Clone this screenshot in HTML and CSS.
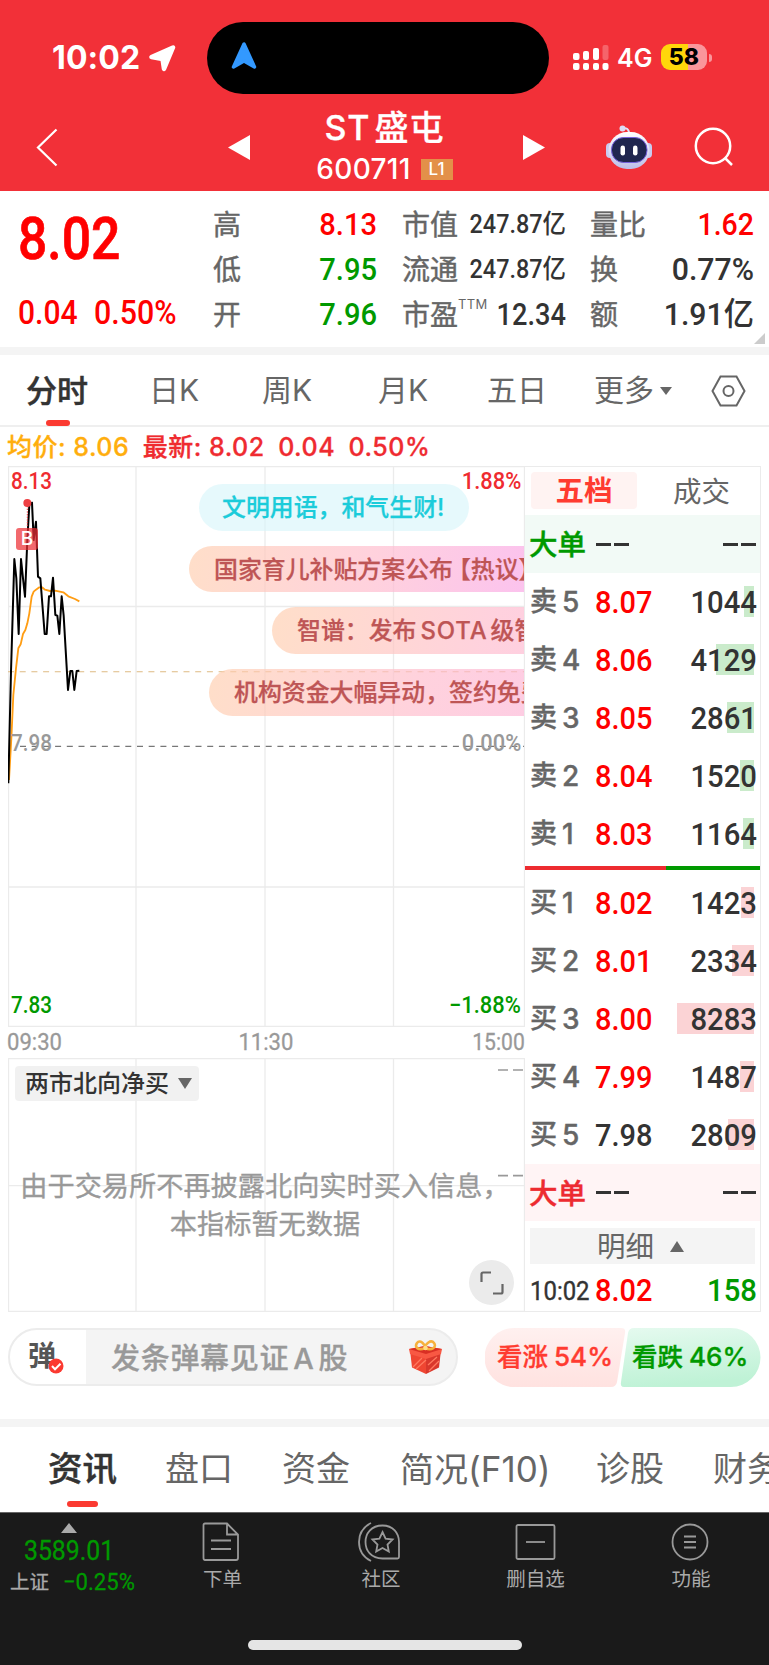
FILE: index.html
```html
<!DOCTYPE html>
<html lang="zh-CN">
<head>
<meta charset="utf-8">
<title>ST盛屯 600711</title>
<link rel="stylesheet" href="styles.css">
</head>
<body>
<div class="app">
<header class="top">
  <div class="status">
    <div class="clock">10:02</div>
    <svg class="loc" width="27" height="27" viewBox="0 0 27 27"><path d="M24 2.500 15 24 13.500 14 2.500 12Z" fill="#fff" stroke="#fff" stroke-width="4.500" stroke-linejoin="round"/></svg>
    <div class="island"><svg width="26" height="29" viewBox="0 0 26 29"><path d="M13 3 2.500 26 13 20 23.500 26Z" fill="#3399ff" stroke="#3399ff" stroke-width="3.500" stroke-linejoin="round"/></svg></div>
    <svg class="signal" width="37" height="26" viewBox="0 0 37 26" fill="#fff"><rect y="8" width="6.500" height="7" rx="2"/><rect x="10" y="6" width="6" height="9" rx="2"/><rect x="20" y="3" width="6" height="12" rx="2"/><rect x="29.500" width="6" height="15" rx="2" opacity=".25"/><rect y="18" width="6.500" height="7" rx="2"/><rect x="10" y="18" width="6" height="7" rx="2"/><rect x="20" y="18" width="6" height="7" rx="2"/><rect x="29.500" y="18" width="6" height="7" rx="2"/></svg>
    <div class="net">4G</div>
    <div class="battery">58</div><i class="nub"></i>
  </div>
  <div class="titlebar">
    <svg width="22" height="39" viewBox="0 0 22 39"><path d="M20.500 1.500 2 19.500 20.500 37.500" fill="none" stroke="#fff" stroke-width="2.200"/></svg>
    <svg class="prev" width="22" height="25"><path d="M22 0V25L0 12.500Z" fill="#fff"/></svg>
    <div class="name"><div class="stock"><span>ST</span>盛屯</div><div class="code">600711<b>L1</b></div></div>
    <svg class="next" width="22" height="25"><path d="M0 0V25L22 12.500Z" fill="#fff"/></svg>
    <svg class="robot" width="48" height="45" viewBox="0 0 48 45">
      <defs><linearGradient id="rb" x2="0" y2="1"><stop stop-color="#fff"/><stop offset="1" stop-color="#bcbde8"/></linearGradient></defs>
      <path d="M17 3.500c4-1 7 0 7 5" fill="none" stroke="#e3e4fa" stroke-width="2"/><circle cx="17.500" cy="3.500" r="3" fill="#dcdcf5"/>
      <rect x="1" y="18" width="8" height="15" rx="4" fill="#c9cbf0"/><rect x="39" y="18" width="8" height="15" rx="4" fill="#c9cbf0"/>
      <rect x="3.500" y="7" width="41" height="37" rx="18.500" fill="url(#rb)"/>
      <rect x="6.500" y="12.500" width="35.500" height="25" rx="12" fill="#20264f" stroke="#7560dc"/>
      <rect x="15.500" y="20.500" width="4.500" height="10" rx="2.200" fill="#fff"/><rect x="28" y="20.500" width="4.500" height="10" rx="2.200" fill="#fff"/>
    </svg>
    <svg class="search" width="40" height="40" viewBox="0 0 40 40" fill="none" stroke="#fff" stroke-width="2.500"><circle cx="19" cy="19" r="17.200"/><path d="m31 31 7 7"/></svg>
  </div>
</header>

<section class="quote">
  <div class="price"><div class="big n">8.02</div><div class="chg"><span class="n">0.04</span><span class="n">0.50%</span></div></div>
  <dl class="c1"><dt>高</dt><dd class="n up">8.13</dd><dt>低</dt><dd class="n dn">7.95</dd><dt>开</dt><dd class="n dn">7.96</dd></dl>
  <dl class="c2"><dt>市值</dt><dd class="n sm">247.87亿</dd><dt>流通</dt><dd class="n sm">247.87亿</dd><dt>市盈<sup>TTM</sup></dt><dd class="n pe">12.34</dd></dl>
  <dl class="c3"><dt>量比</dt><dd class="n up">1.62</dd><dt>换</dt><dd class="n">0.77%</dd><dt>额</dt><dd class="n">1.91亿</dd></dl>
  <i class="corner"></i>
</section>

<nav class="periods">
  <span class="on">分时</span><span>日K</span><span>周K</span><span>月K</span><span>五日</span><span>更多<i></i></span>
  <svg width="35" height="32" viewBox="0 0 35 32" fill="none" stroke="#666" stroke-width="2"><path d="M9.500 1.500h16L33.500 16l-8 14.500h-16L1.500 16Z"/><circle cx="17.500" cy="16" r="5"/></svg>
</nav>
<div class="legend"><span class="avg">均价: 8.06</span><span>最新: 8.02</span><span>0.04</span><span>0.50%</span></div>

<main class="market">
  <div class="charts">
    <div class="main-chart">
      <svg class="plot" width="517" height="561" viewBox="8 466 517 561" fill="none">
        <path d="M8 466.500H525M8 606.500H525M8 887H525M8 1026.300H525M8.500 466V1027M136 466V1027M265 466V1027M393.500 466V1027M524.500 466V1027" stroke="#ebebeb" stroke-width="1.300"/>
        <path d="M8 671.700H524" stroke="#deba82" stroke-width="1.100" stroke-dasharray="6 5.700"/>
        <path d="M20 746.300H524" stroke="#777" stroke-width="1.200" stroke-dasharray="6 5.700"/>
        <g transform="translate(0 455) scale(.33333)" stroke-linejoin="round">
          <path d="m27 975 7-125 6-130 8-80 7-60 7-12 7-31 7-12 6-20 6-30 7-50 6-15 7-6 10-7h8l9 7 15 4 15-1 25 5 15 12 20 8 13 7" stroke="#ff9d13" stroke-width="5.500"/>
          <path d="M25 985 33 650 43 312 49 370 56 537 63 312 69 370 75 425 82 255 88 150 96 143 101 255 108 200 114 365 121 370 134 537H140L147 424H153L159 368 166 480 172 482 178 537 185 424 191 482 204 705 211 648H217L223 705 230 648 238 647" stroke="#000" stroke-width="6"/>
          <path d="M82 145V215" stroke="#ed2f35" stroke-width="3" stroke-dasharray="4 4"/><circle cx="82" cy="144" r="12" fill="#ee3f43"/>
        </g>
      </svg>
      <span class="n ax tl">8.13</span><span class="n ax tr">1.88%</span>
      <span class="n ax ml">7.98</span><span class="n ax mr">0.00%</span>
      <span class="n ax bl">7.83</span><span class="n ax br">−1.88%</span>
      <b class="buy">B</b>
      <div class="barrage"><p class="calm">文明用语，和气生财!</p><p class="b2">国家育儿补贴方案公布<span>【热议】</span></p><p class="b3">智谱：发布<span>SOTA</span>级智</p><p class="b4">机构资金大幅异动，签约免费</p></div>
    </div>
    <div class="times"><span class="n">09:30</span><span class="n">11:30</span><span class="n">15:00</span></div>
    <div class="sub-chart">
      <svg class="plot" width="517" height="254" viewBox="8 1058 517 254"><path d="M8 1058.700H525M8 1185.600H525M8 1311.500H525M8.500 1058V1312M136 1058V1312M265 1058V1312M393.500 1058V1312M524.500 1058V1312" stroke="#ebebeb" stroke-width="1.300"/><path d="M498 1070h10m5 0h10M498 1175.700h10m5 0h10" stroke="#999" stroke-width="1.700"/></svg>
      <div class="indicator">两市北向净买<i></i></div>
      <p class="empty">由于交易所不再披露北向实时买入信息，<br>本指标暂无数据</p>
      <div class="expand"><svg width="24" height="24" fill="none" stroke="#666" stroke-width="2.200"><path d="M1.500 11V3q0-1.500 1.500-1.500h8M13 22.500h8q1.500 0 1.500-1.500v-8"/></svg></div>
    </div>
  </div>
  <aside class="book">
    <div class="switch"><b>五档</b><span>成交</span></div>
    <div class="large sell"><b>大单</b><i></i><i></i></div>
    <div class="row"><label>卖<span>5</span></label><em class="n">8.07</em><u style="width:10px"></u><strong class="n">1044</strong></div>
    <div class="row"><label>卖<span>4</span></label><em class="n">8.06</em><u style="width:38px"></u><strong class="n">4129</strong></div>
    <div class="row"><label>卖<span>3</span></label><em class="n">8.05</em><u style="width:27px"></u><strong class="n">2861</strong></div>
    <div class="row"><label>卖<span>2</span></label><em class="n">8.04</em><u style="width:14px"></u><strong class="n">1520</strong></div>
    <div class="row"><label>卖<span>1</span></label><em class="n">8.03</em><u style="width:11px"></u><strong class="n">1164</strong></div>
    <div class="ratio"></div>
    <div class="row bid"><label>买<span>1</span></label><em class="n">8.02</em><u style="width:13px"></u><strong class="n">1423</strong></div>
    <div class="row bid"><label>买<span>2</span></label><em class="n">8.01</em><u style="width:22px"></u><strong class="n">2334</strong></div>
    <div class="row bid"><label>买<span>3</span></label><em class="n">8.00</em><u style="width:77px"></u><strong class="n">8283</strong></div>
    <div class="row bid"><label>买<span>4</span></label><em class="n">7.99</em><u style="width:14px"></u><strong class="n">1487</strong></div>
    <div class="row bid flat"><label>买<span>5</span></label><em class="n">7.98</em><u style="width:26px"></u><strong class="n">2809</strong></div>
    <div class="large bigbuy"><b>大单</b><i></i><i></i></div>
    <div class="detail">明细<i></i></div>
    <div class="row tick"><label class="n">10:02</label><em class="n">8.02</em><strong class="n dn">158</strong></div>
  </aside>
</main>

<section class="talk">
  <div class="input">
    <div class="dan">弹<svg width="16" height="16"><circle cx="8" cy="8" r="7.500" fill="#fb3a31"/><path d="m4 8 3 3.200 5.500-5.500" fill="none" stroke="#fff" stroke-width="2"/></svg></div>
    <span>发条弹幕见证<em>A</em>股</span>
    <svg class="gift" width="33" height="35" viewBox="0 0 33 35"><path d="M1 10 17 15V34L3 27.500Z" fill="#ef4632"/><path d="m17 15 15-5-2 17.500L17 34Z" fill="#d9382c"/><path d="m0 9 16-3 17 3-1 5-15 5L1 14Z" fill="#f85843"/><path d="m0 9 16-3 17 3-16 5Z" fill="#d92f24"/><path d="m4 27 9-9M7 29l10-9M20 31l10-10M19 25l9-8" stroke="#ff795f" stroke-width="1.300"/><g fill="none" stroke="#f6b13d" stroke-width="2.600"><path d="M16 8C9 11 5 7 8 3c3-4 8 1 8 5Z"/><path d="M16 8c7 3 12-1 9-5-3-4-9 1-9 5Z"/></g><circle cx="16.500" cy="8" r="2.300" fill="#ffdc84"/></svg>
  </div>
  <div class="vote">
    <svg width="276" height="59" viewBox="0 0 276 59"><defs><linearGradient id="vr" x2="0" y2="1"><stop stop-color="#fff0ef"/><stop offset="1" stop-color="#ffe2e0"/></linearGradient><linearGradient id="vg" x2=".2" y2="1"><stop stop-color="#e5faef"/><stop offset="1" stop-color="#bff2d6"/></linearGradient></defs><path d="M29 0H136Q141 0 140 5L132 54Q131 59 126 59H29A29 29 0 0 1 29 0Z" fill="url(#vr)"/><path d="M149 0H246A29 29 0 0 1 246 59H139Q135 59 136 54L143 5Q144 0 149 0Z" fill="url(#vg)"/></svg>
    <span>看涨<em>54%</em></span><span class="fall">看跌<em>46%</em></span>
  </div>
</section>

<nav class="sections"><span class="on">资讯</span><span>盘口</span><span>资金</span><span>简况<em>(F10)</em></span><span>诊股</span><span>财务</span></nav>

<footer class="dock">
  <div class="items">
    <div class="index"><i></i><span class="n val">3589.01</span><div><span>上证</span><span class="n pct">−0.25%</span></div></div>
    <div class="item"><svg class="doc" width="38" height="40" viewBox="0 0 38 40"><path d="M3 1.500H25L36 12.500V36Q36 38 34 38H3Q1.500 38 1.500 36V3Q1.500 1.500 3 1.500ZM25 1.500V12.500H36M9 18.500H29M9 27H29"/></svg>下单</div>
    <div class="item"><svg class="club" width="43" height="40" viewBox="0 0 43 40"><path d="M13 1C-3 9-3 31 13 39M24.500 3.500C13 3.500 7.500 11.500 7.500 20S13 36.500 24.500 36.500H39.500Q41 36.500 41 35V20C41 11 35 3.500 24.500 3.500ZM24.500 10l3.100 6.600 7 .9-5.100 5 1.300 7-6.300-3.500-6.300 3.500 1.300-7-5.100-5 7-.9Z"/></svg>社区</div>
    <div class="item"><svg width="41" height="40" viewBox="0 0 41 40"><rect x="1.500" y="3" width="38" height="34" rx="1.500"/><path d="M11 20H30"/></svg>删自选</div>
    <div class="item"><svg width="40" height="40" viewBox="0 0 40 40"><circle cx="19" cy="20" r="17.500"/><path d="M13 14.500H25M13 20H25M13 25.500H25"/></svg>功能</div>
  </div>
  <div class="home"></div>
</footer>
</div>
</body>
</html>
```
FILE: styles.css
```css
* { box-sizing: border-box; }
body { margin: 0; background: #fff; font-family: Inter, "Noto Sans CJK SC", sans-serif; color: #333; }
p, dl, dd { margin: 0; }
em, i { font-style: normal; }
svg { display: block; flex: none; }
.app { width: 769px; height: 1665px; overflow: hidden; display: flex; flex-direction: column; }
.app > * { flex: none; }
.n { font-family: Roboto, "Noto Sans CJK SC", sans-serif; font-weight: 500; white-space: nowrap; transform: scaleX(.92); transform-origin: left; }

.top { height: 191px; background: #f23038; color: #fff; }
.status { height: 116px; display: flex; align-items: center; padding-left: 52px; }
.clock { width: 97px; font-size: 32px; font-weight: 700; letter-spacing: .1px; margin-top: -1px; }
.island { width: 342px; height: 72px; margin-left: 31px; border-radius: 36px; background: #000; display: flex; align-items: center; padding-left: 24px; }
.island svg { margin-top: -5px; }
.signal { margin-left: 24px; }
.net { width: 44px; margin-left: 7px; font-size: 25px; font-weight: 600; }
.battery { width: 46px; height: 26px; margin-top: -2px; border-radius: 9px; background: linear-gradient(90deg, #ffd60a 58%, #fa969b 58%); color: #000; font-weight: 800; font-size: 23px; line-height: 26px; text-align: center; }
.nub { width: 3px; height: 8px; margin-left: 2px; border-radius: 0 3px 3px 0; background: #fa969b; }
.titlebar { height: 75px; display: flex; align-items: center; padding: 0 0 13px 36px; }
.prev { margin-left: 170px; }
.name { width: 273px; margin-top: 2px; display: flex; flex-direction: column; align-items: center; }
.stock { font-size: 34px; line-height: 41px; font-weight: 500; display: flex; gap: 4px; letter-spacing: 1px; margin-left: -4px; -webkit-text-stroke: .3px; }
.code { height: 42px; line-height: 44px; margin-left: -4px; font-size: 28px; font-weight: 500; display: flex; align-items: center; letter-spacing: .3px; }
.code b { width: 32px; height: 21px; margin: 1px 0 0 10px; background: #e39049; font-size: 17px; line-height: 21px; font-weight: 500; text-align: center; }
.robot { margin-left: 60px; }
.search { margin-left: 41px; }

.quote { position: relative; height: 164px; display: flex; border-bottom: 8px solid #f4f4f4; padding-top: 11px; }
.price { width: 213px; padding-left: 18px; color: #f00; }
.big { font-size: 60px; line-height: 74px; transform: scaleX(.86); -webkit-text-stroke: .7px #f00; }
.chg { display: flex; font-size: 33px; line-height: 40px; margin-top: 17px; }
.chg .n + .n { margin-left: 11px; }
.chg .n:first-child { transform: scaleX(.91); }
.quote dl { display: grid; grid-template-columns: auto 1fr; grid-template-rows: repeat(3, 45px); align-items: center; line-height: 45px; }
.quote dt { font-size: 28px; color: #666; white-space: nowrap; -webkit-text-stroke: .45px; padding-top: 1px; }
.quote dd { font-size: 32px; text-align: right; transform: scaleX(.91); transform-origin: right; margin-top: -1px; }
.quote dd.sm { font-size: 26px; transform: scaleX(.9); }
.quote dd.pe { transform: scaleX(.85); }
.quote .c3 dd { transform: scaleX(.945); }
.quote .c3 .up { transform: scaleX(.89); }
.quote .up { color: #f00; }
.quote .dn { color: #090; }
.c1 { width: 164px; }
.c2 { width: 164px; margin-left: 25px; }
.c3 { width: 164px; margin-left: 24px; }
.quote sup { font-size: 13px; position: absolute; line-height: 16px; margin-top: 3px; letter-spacing: .3px; -webkit-text-stroke: 0; }
.corner { position: absolute; right: 4px; bottom: 3px; border-left: 11px solid transparent; border-bottom: 11px solid #ccc; }

.periods { height: 72px; border-bottom: 2px solid #efefef; display: grid; grid-template-columns: 123px 113px 116px 109px 107px 117px 1fr; padding-left: 26px; align-items: center; font-size: 30px; color: #666; line-height: 71px; }
.periods .on { position: relative; color: #333; font-weight: 500; font-size: 31px; -webkit-text-stroke: .5px; }
.on::after { content: ""; position: absolute; left: 20px; bottom: 0; width: 24px; height: 6px; border-radius: 3px; background: #fb3a31; }
.periods i { display: inline-block; margin-left: 6px; vertical-align: 6px; border: 6px solid transparent; border-top: 8px solid #666; border-bottom: 0; }
.legend { height: 39px; display: flex; gap: 13.500px; padding: 1px 7px 0; line-height: 38px; font-size: 25px; letter-spacing: .5px; font-weight: 500; color: #ef2b30; white-space: nowrap; -webkit-text-stroke: .3px; }
.legend .avg { color: #ffae0d; }

.market { display: grid; grid-template-columns: 517px 236px; margin-left: 8px; height: 846px; }
.main-chart, .sub-chart { position: relative; overflow: hidden; }
.main-chart { height: 561px; }
.sub-chart { height: 254px; }
.plot { position: absolute; left: 0; top: 0; }
.ax { position: absolute; font-size: 24px; line-height: 24px; left: 3px; color: #999; transform: scaleX(.86); }
.tr, .mr, .br { left: auto; right: 4px; transform: scaleX(.91); transform-origin: right; }
.tl, .tr { top: 3px; color: #ef2b30; }
.ml, .mr { top: 265px; }
.bl, .br { bottom: 10px; color: #090; }
.buy { position: absolute; left: 8px; top: 62px; width: 22px; height: 22px; border-radius: 3px; background: rgba(237, 47, 53, .72); color: #fff; font-size: 19px; line-height: 22px; font-weight: 500; text-align: center; }
.barrage { position: absolute; inset: 18px 1px auto 0; overflow: hidden; display: grid; gap: 15px; }
.barrage p { width: 480px; height: 46.700px; border-radius: 24px; padding-left: 25px; line-height: 47px; font-size: 23.900px; font-weight: 500; white-space: nowrap; color: #be5555; -webkit-text-stroke: .25px; background: linear-gradient(100deg, rgba(255, 205, 172, .65), rgba(255, 190, 207, .7) 50%, rgba(249, 160, 231, .65) 95%); }
.barrage .calm { width: 270px; margin-left: 191px; padding-left: 23px; color: #1bccda; background: rgba(213, 245, 250, .6); }
.barrage .b2 { margin-left: 181px; width: 370px; }
.b2 span { margin-left: -6px; }
.barrage .b3 { margin-left: 264px; }
.barrage .b4 { margin-left: 201px; }
.barrage .b3, .barrage .b4 { background: linear-gradient(100deg, rgba(255, 205, 172, .65), rgba(255, 190, 207, .7) 45%, rgba(252, 175, 215, .65) 75%); }
.b3 span { margin: 0 3px 0 4px; letter-spacing: .9px; }
.times { height: 31px; display: flex; justify-content: space-between; font-size: 24px; line-height: 30px; color: #999; }
.times span { margin-left: -1px; }
.times span:nth-child(2) { transform-origin: center; }
.times span:last-child { transform: scaleX(.88); transform-origin: right; }
.times .n { font-weight: 400; -webkit-text-stroke: .3px; }
.indicator { position: absolute; left: 7px; top: 8px; width: 184px; height: 35px; padding-left: 10px; border-radius: 4px; background: rgba(239, 239, 239, .85); font-size: 24px; line-height: 36px; font-weight: 500; display: flex; align-items: center; }
.indicator i { margin-left: 9px; border: 7px solid transparent; border-top: 11px solid #666; border-bottom: 0; }
.empty { position: absolute; top: 110px; left: 12px; width: 490px; font-size: 27.200px; line-height: 38px; color: #999; text-align: center; white-space: nowrap; -webkit-text-stroke: .35px; }
.expand { position: absolute; left: 461px; top: 202px; width: 45px; height: 45px; border-radius: 50%; background: #ebebeb; display: grid; place-items: center; }

.book { border: 1px solid #ebebeb; border-left: 0; height: 846px; overflow: hidden; }
.switch { height: 48px; display: flex; align-items: center; padding: 0 0 1px 6px; font-size: 28.500px; }
.switch b { width: 106px; height: 37px; line-height: 38px; border-radius: 4px; background: #fff3f2; color: #ff3b30; text-align: center; font-weight: 700; }
.switch span { margin: -2px 0 0 36px; color: #666; }
.large { height: 58px; display: flex; align-items: center; padding: 0 4px; background: #f2faf6; }
.large b { width: 67px; font-size: 28.500px; font-weight: 500; color: #090; margin-top: -3px; -webkit-text-stroke: .4px; }
.large i { width: 33px; height: 3px; background: linear-gradient(90deg, #333 15px, transparent 15px 18px, #333 18px); }
.large i + i { margin-left: 94px; }
.row { position: relative; height: 58px; display: grid; grid-template-columns: 65px 61px 1fr; padding: 0 3px 0 5px; align-items: center; }
.row label { font-size: 27px; color: #666; font-weight: 500; display: flex; align-items: center; line-height: 40px; -webkit-text-stroke: .4px; }
.row label span { margin-left: 5px; font-size: 28px; }
.row em { font-size: 31.500px; color: #f00; }
.row strong { position: relative; font-size: 31.500px; text-align: right; transform: scaleX(.93); transform-origin: right; }
.row u { position: absolute; right: 6px; top: 13px; height: 31px; background: #caebcb; }
.bid u { background: #fbd3d5; }
.row.flat em { color: #333; }
.ratio { height: 3.500px; margin: 3px 0 4.500px; background: linear-gradient(90deg, #ed2b30 60%, #090 60%); }
.large.bigbuy { height: 57px; background: #fff4f5; }
.bigbuy b { color: #ed2b30; }
.detail { height: 36px; margin: 7px 5px 0; padding-left: 67px; background: #f4f4f4; font-size: 28.500px; line-height: 35px; color: #666; display: flex; align-items: center; }
.detail i { margin-left: 16px; border: 7px solid transparent; border-bottom: 11px solid #666; border-top: 0; }
.tick { height: 53px; }
.row label.n { font-size: 26px; color: #333; font-weight: 400; }
.row .dn { color: #090; }

.talk { height: 115px; display: flex; padding: 16px 0 0 8px; border-bottom: 8px solid #f4f4f4; }
.input { width: 450px; height: 58px; border: 2px solid #ececec; border-radius: 29px; background: linear-gradient(90deg, #fff 76px, #f4f4f4 76px); display: flex; align-items: center; font-size: 29px; color: #999; }
.dan { position: relative; width: 101px; padding-left: 18px; color: #555; font-size: 28px; line-height: 50px; font-weight: 700; margin-top: -2px; }
.dan svg { position: absolute; left: 38px; top: 27px; }
.input span { width: 298px; letter-spacing: .7px; white-space: nowrap; font-weight: 500; margin-top: -2px; -webkit-text-stroke: .3px; }
.input em { margin: 0 4px; }
.vote { position: relative; width: 276px; height: 58px; margin-left: 27px; display: flex; line-height: 58px; font-size: 25.500px; font-weight: 500; color: #ff3b30; -webkit-text-stroke: .35px; }
.vote svg { position: absolute; }
.vote span { position: relative; width: 135px; padding-left: 12px; white-space: nowrap; }
.vote .fall { color: #090; }
.vote em { margin-left: 6px; font-size: 26px; }

.sections { height: 86px; display: grid; grid-template-columns: 117px 117px 118px 196px 117px 100px; padding-left: 48px; font-size: 34px; line-height: 84px; color: #666; white-space: nowrap; overflow: hidden; }
.sections em { font-size: 35px; }
.sections .on { position: relative; font-weight: 500; font-size: 34.500px; color: #333; -webkit-text-stroke: .5px; }
.sections .on::after { left: 19px; bottom: 6px; width: 31px; height: 6.500px; }
.dock { height: 154px; margin-top: -1px; position: relative; background: #1a1a1a; border-top: 1px solid #666; }
.items { height: 127px; display: grid; grid-template-columns: 138px 169px 148px 161px 150px; }
.index { padding-top: 10px; display: flex; flex-direction: column; align-items: center; color: #aaa; font-size: 19.500px; }
.index i { border: 8.500px solid transparent; border-bottom: 10px solid #aaa; border-top: 0; }
.index div { display: flex; gap: 14px; align-self: flex-start; margin-left: 10px; line-height: 25px; white-space: nowrap; -webkit-text-stroke: .3px; }
.index .val { font-size: 27px; line-height: 37px; color: #090; font-weight: 400; transform-origin: center; -webkit-text-stroke: .3px; }
.index .pct { font-size: 24px; color: #090; font-weight: 400; }
.item { padding-top: 9px; display: flex; flex-direction: column; align-items: center; font-size: 19.500px; line-height: 34px; color: #aaa; }
.item svg { fill: none; stroke: #999; stroke-width: 1.800; }
.item .doc, .item .club { margin-right: 4px; }
.home { width: 274px; height: 10px; margin-left: 248px; border-radius: 5px; background: #e5e5e5; }
```
